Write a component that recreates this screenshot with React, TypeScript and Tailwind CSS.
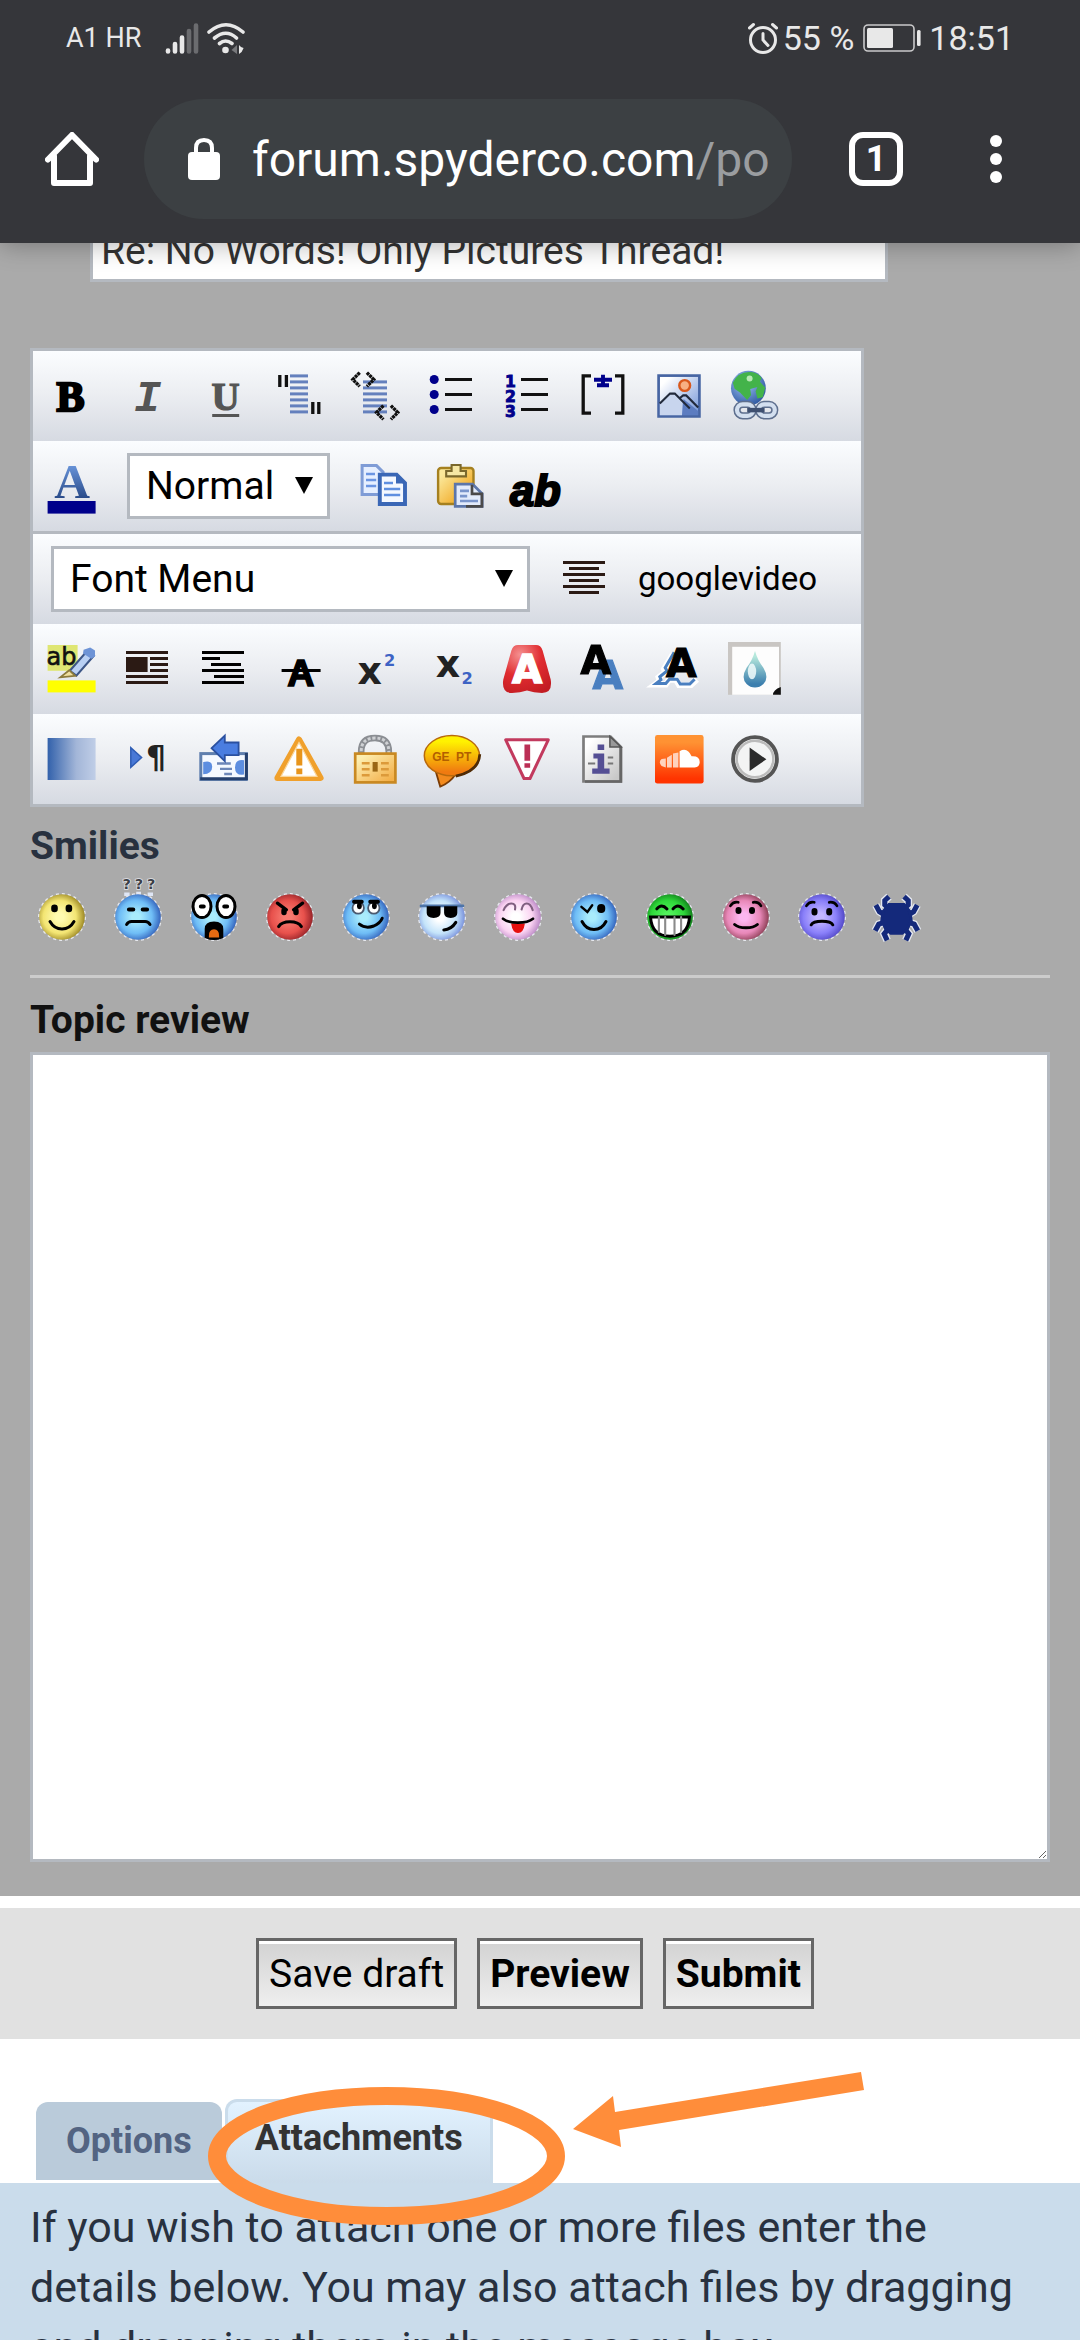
import type { ReactNode } from "react";

type Item = { name: string; art: ReactNode };

const SANS = "DejaVu Sans, sans-serif";
const ARIAL = "Liberation Sans, sans-serif";
const SERIF = "Liberation Serif, serif";
const MONO = "Liberation Mono, monospace";

function Art({ children }: { children: ReactNode }) {
  return (
    <svg viewBox="0 0 16 16" className="w-12 h-12 overflow-visible" aria-hidden="true">
      {children}
    </svg>
  );
}

function ToolButton({ item }: { item: Item }) {
  return (
    <button type="button" title={item.name} aria-label={item.name} className="w-[76px] h-full shrink-0 flex items-center justify-center">
      <Art>{item.art}</Art>
    </button>
  );
}

// Text-line icons: each entry is [x1, x2, y]
function Lines({ rows, color }: { rows: number[][]; color: string }) {
  return (
    <g stroke={color} strokeWidth="1">
      {rows.map(([x1, x2, y]) => (
        <line key={`${x1}-${y}`} x1={x1} x2={x2} y1={y} y2={y} />
      ))}
    </g>
  );
}

const formatTools: Item[] = [
  {
    name: "Bold",
    art: <text x="7.8" y="13" fontSize="14" fontWeight="700" fontFamily={SERIF} textAnchor="middle" stroke="#000" strokeWidth="0.8">B</text>,
  },
  {
    name: "Italic",
    art: <text x="8.2" y="13" fontSize="15" fontWeight="700" fontStyle="italic" fontFamily={MONO} textAnchor="middle" fill="#555">I</text>,
  },
  {
    name: "Underline",
    art: (
      <>
        <text x="8.9" y="12.8" fontSize="13" fontWeight="700" fontFamily={SERIF} textAnchor="middle" fill="#555" stroke="#555" strokeWidth="0.4">U</text>
        <rect x="4.4" y="14" width="9" height="1" fill="#555" />
      </>
    ),
  },
  {
    name: "Quote",
    art: (
      <>
        <Lines color="#6480bd" rows={[[5, 11, 1.3], [5, 11, 3.3], [5, 11, 5.3], [5, 11, 7.3], [5, 11, 9.3], [5, 11, 11.3], [5, 11, 13.3]]} />
        <path d="M1.6 1v4M3.8 1v4M12.6 10v4M14.6 10v4" stroke="#111" strokeWidth="1.1" />
      </>
    ),
  },
  {
    name: "Code",
    art: (
      <>
        <Lines color="#6480bd" rows={[[4, 12, 3.3], [4, 12, 5.3], [4, 12, 7.3], [4, 12, 9.3], [4, 12, 11.3], [4, 12, 13.3]]} />
        <path d="M2.9.2.6 2.5l2.3 2.3M5.3.2l2.3 2.3-2.3 2.3M10.8 11.2l-2.3 2.3 2.3 2.3M13.3 11.2l2.3 2.3-2.3 2.3" fill="none" stroke="#111" strokeWidth="1.1" strokeDasharray="1 .2" />
      </>
    ),
  },
  {
    name: "List",
    art: (
      <>
        <Lines color="#111" rows={[[6, 15, 2.5], [6, 15, 7.5], [6, 15, 12.5]]} />
        <g fill="#00008b">
          <circle cx="2.4" cy="2.5" r="1.5" />
          <circle cx="2.4" cy="7.5" r="1.5" />
          <circle cx="2.4" cy="12.5" r="1.5" />
        </g>
      </>
    ),
  },
  {
    name: "Ordered list",
    art: (
      <>
        <Lines color="#111" rows={[[6, 15, 2.5], [6, 15, 7.5], [6, 15, 12.5]]} />
        <g fill="#00008b" stroke="#00008b" strokeWidth="0.3" fontFamily={SANS} fontSize="5.2" fontWeight="700" textAnchor="middle">
          <text x="2.5" y="4.9">1</text>
          <text x="2.5" y="10">2</text>
          <text x="2.5" y="15.1">3</text>
        </g>
      </>
    ),
  },
  {
    name: "List item",
    art: (
      <>
        <path d="M4 1.3H1.4v12.4H4M12 1.3h2.6v12.4H12" fill="none" stroke="#111" strokeWidth="1.1" />
        <path d="M5 2.6h6M8 .9v3.6M6 4.4h4" stroke="#00008b" strokeWidth="1.3" />
      </>
    ),
  },
  {
    name: "Image",
    art: (
      <>
        <rect x="1.2" y="1.2" width="13.6" height="13.6" fill="url(#sky)" stroke="#4765a3" strokeWidth="0.9" />
        <path d="M1.6 10.5 6 6.7l3 2.8v4.9H1.6z" fill="#c8d5ee" />
        <path d="M9.5 9 14.4 13v1.4H9z" fill="#5c7cc0" />
        <path d="M1.6 10.5 5 7.2h1.6l5 5M8.4 8.6l1-.8h1l4 4" fill="none" stroke="#222a3c" strokeWidth="0.7" />
        <circle cx="9.9" cy="4.5" r="1.8" fill="#f7b083" stroke="#d9581c" strokeWidth="0.8" />
      </>
    ),
  },
  {
    name: "Link",
    art: (
      <>
        <circle cx="5.8" cy="5.4" r="5.8" fill="url(#globe)" />
        <path d="M.6 3.6Q2.4-.2 6.4 0q2.600.2 3.800 2l-1.400 3-2.400.7.3 2-1.300 1.600L3 6.800 1.200 5.600zM9.600 3.200l1.800 2-.8 3.200-1.800.4-.6-2.400z" fill="#43b34a" />
        <circle cx="6.2" cy="2.2" r="1" fill="#b7eab4" />
        <g fill="none" stroke="#5e6f8e" strokeWidth="2.4">
          <rect x="2" y="10.8" width="5.4" height="3.8" rx="1.9" />
          <rect x="9.2" y="10.8" width="5.4" height="3.8" rx="1.9" />
        </g>
        <g fill="none" stroke="#d3dfef" strokeWidth="1.4">
          <rect x="2" y="10.8" width="5.4" height="3.8" rx="1.9" />
          <rect x="9.2" y="10.8" width="5.4" height="3.8" rx="1.9" />
        </g>
        <path d="M5.4 12.7h5.8" stroke="#3e4f70" strokeWidth="1.5" />
      </>
    ),
  },
];

const fontColor: Item = {
  name: "Font colour",
  art: (
    <>
      <text x="8.4" y="12" fontSize="16.5" fontWeight="700" fontFamily={SERIF} textAnchor="middle" fill="url(#blueLetter)">A</text>
      <rect x="0.2" y="13" width="16" height="4.2" fill="#00008b" />
    </>
  ),
};

const clipboardTools: Item[] = [
  {
    name: "Copy",
    art: (
      <>
        <path d="M.7 1.200h4.800l2.200 2.200v7.400h-7z" fill="#e6efff" stroke="#7f9cd6" strokeWidth="1" />
        <path d="M2 4h3M2 6h3.400M2 8h3.400" stroke="#6b95e2" strokeWidth="0.9" />
        <path d="M6.600 4.200h5.600l2.800 2.800v7H6.600z" fill="#f4f8ff" stroke="#3a67b6" strokeWidth="1.3" />
        <path d="M8 7h3M8 9h5.400M8 11h5.400" stroke="#5f8fe0" strokeWidth="0.9" />
        <path d="M12 4.200V7.200h3z" fill="#3a67b6" />
      </>
    ),
  },
  {
    name: "Paste",
    art: (
      <>
        <rect x="0.7" y="2" width="11.800" height="12" rx="1" fill="url(#board)" stroke="#a5801f" strokeWidth="0.8" />
        <path d="M3.400 4.800V3h1.800V1h3v2H10v1.800z" fill="#f6e7a4" stroke="#7a682c" strokeWidth="0.7" />
        <path d="M6.400 7.400h5.800l3.200 3.200v4.200h-9z" fill="#e3ebfb" stroke="#5c76aa" strokeWidth="0.9" />
        <path d="M8 9.600h3M8 11.400h2.400M8 13h6" stroke="#7a95cb" strokeWidth="0.9" />
        <path d="M12 7.600v3h3.300v4.200H10" fill="none" stroke="#4b4a4a" strokeWidth="0.9" />
      </>
    ),
  },
  {
    name: "Plain text",
    art: <text x="7.8" y="14.6" fontSize="14.5" fontWeight="700" fontStyle="italic" fontFamily={ARIAL} textAnchor="middle" stroke="#000" strokeWidth="0.7">ab</text>,
  },
];

const centerTool: Item = {
  name: "Centre",
  art: <Lines color="#2b1a14" rows={[[1, 15, 2.5], [3, 13, 4.5], [1, 15, 6.5], [3, 13, 8.5], [1, 15, 10.5], [3, 13, 12.5]]} />,
};

const styleTools: Item[] = [
  {
    name: "Highlight",
    art: (
      <>
        <rect x="0.2" y="0" width="10" height="8.6" fill="#dfe673" />
        <text x="4.8" y="6.8" fontSize="8" fontFamily={SANS} textAnchor="middle" fill="#111" stroke="#111" strokeWidth="0.2">ab</text>
        <path d="m7.600 8.600 5.600-6.400 2.400 1.400-5.800 6.600z" fill="#b9d0f4" stroke="#3d5687" strokeWidth="0.7" />
        <path d="m12.200 1.600 2.200-.8 1.600 1v2l-1.200.8-2.800-1.800z" fill="#6d93d6" />
        <path d="M4.400 10.800 7.400 8.400l2 1.900z" fill="#f0dfa0" stroke="#8b7a3c" strokeWidth="0.6" />
        <rect x="0.2" y="11.8" width="16" height="4" fill="#ff0" />
      </>
    ),
  },
  {
    name: "Float left",
    art: (
      <>
        <Lines color="#2b1a14" rows={[[1, 15, 2.5], [9, 15, 4.5], [9, 15, 6.5], [9, 15, 8.5], [1, 15, 10.5], [1, 15, 12.5]]} />
        <rect x="1" y="4" width="7.2" height="5" fill="#2b1a14" />
      </>
    ),
  },
  {
    name: "Indent",
    art: <Lines color="#000" rows={[[1, 15, 2.5], [1, 7, 4.5], [4, 14, 6.5], [1, 15, 8.5], [5, 15, 10.5], [1, 15, 12.5]]} />,
  },
  {
    name: "Strikethrough",
    art: (
      <>
        <text x="8.6" y="13.8" fontSize="12.5" fontWeight="700" fontFamily={ARIAL} textAnchor="middle" stroke="#000" strokeWidth="0.5">A</text>
        <rect x="2.2" y="8" width="13" height="1" />
      </>
    ),
  },
  {
    name: "Superscript",
    art: (
      <>
        <text x="6.2" y="13" fontSize="12.6" fontWeight="700" fontFamily={SANS} textAnchor="middle" fill="#222">x</text>
        <text x="12.9" y="7" fontSize="5.4" fontWeight="700" fontFamily={SANS} textAnchor="middle" fill="#3d63c4">2</text>
      </>
    ),
  },
  {
    name: "Subscript",
    art: (
      <>
        <text x="7" y="10.8" fontSize="12.6" fontWeight="700" fontFamily={SANS} textAnchor="middle" fill="#222">x</text>
        <text x="13.4" y="13" fontSize="5.4" fontWeight="700" fontFamily={SANS} textAnchor="middle" fill="#3d63c4">2</text>
      </>
    ),
  },
  {
    name: "Glow",
    art: (
      <>
        <path d="M5 0h6q1.600 0 2.200 1.800l2.700 9.700Q16.600 16 13 16q-2.800 0-5-.8-2.200.8-5 .8-3.600 0-2.900-4.500L2.800 1.800Q3.400 0 5 0z" fill="url(#redGlow)" />
        <text x="8" y="12.8" fontSize="13" fontWeight="700" fontFamily={SANS} textAnchor="middle" fill="#fff" stroke="#fff" strokeWidth="0.5">A</text>
      </>
    ),
  },
  {
    name: "Drop shadow",
    art: (
      <text x="5.6" y="9.8" fontSize="13.2" fontWeight="700" fontFamily={SANS} textAnchor="middle" stroke="#000" strokeWidth="0.4" className="[filter:drop-shadow(4px_5px_0_#4a7fc0)]">A</text>
    ),
  },
  {
    name: "Wave",
    art: (
      <>
        <path d="M6 3 3 8l.6 1-2.400 1.800.4 1.200L0 13.200h3.600l1-1.600H7l1 1.700h4l2-1.800" fill="none" stroke="#fff" strokeWidth="2" />
        <path d="M6.400 2.400 3.400 7.600l.6 1-2.400 2 .4 1L.4 12.800h3.200l1.200-1.400h2.600l1 1.600h3.200l1.600-1.600" fill="none" stroke="#4a7fc0" strokeWidth="1" />
        <text x="8.8" y="10.7" fontSize="13.2" fontWeight="700" fontFamily={SANS} textAnchor="middle" stroke="#000" strokeWidth="0.4">A</text>
      </>
    ),
  },
  {
    name: "Blur",
    art: (
      <>
        <rect x="-1" y="-1" width="17.6" height="17.6" fill="#c9c6c3" />
        <rect x="0.4" y="0.6" width="15.6" height="16" fill="#fdfdfd" />
        <path d="M8 2q.8 3 2.800 5.600 2 3.400 0 5.400-1.200 1.200-2.800 1.200T5.200 13q-2-2 0-5.400Q7.200 5 8 2z" fill="url(#drop)" />
        <ellipse cx="7" cy="8.8" rx="1.4" ry="2.6" fill="#f2fcfc" opacity="0.85" />
        <path d="M14 16.600q0-1.600 2.600-2.600v2.600z" fill="#111" />
      </>
    ),
  },
];

const extraTools: Item[] = [
  { name: "Gradient", art: <rect x="0.2" y="1" width="16" height="14" fill="url(#blueFade)" /> },
  {
    name: "Left to right",
    art: (
      <>
        <path d="M2.600 4.200v6.600l3.600-3.300z" fill="#4878d6" stroke="#2e5cb4" strokeWidth="0.5" />
        <text x="11" y="11" fontSize="10.5" fontWeight="700" fontFamily={SANS} textAnchor="middle" fill="#222">¶</text>
      </>
    ),
  },
  {
    name: "Marquee",
    art: (
      <>
        <rect x="0.6" y="6.2" width="15.2" height="8.6" fill="#f5f9ff" stroke="#5f7fae" strokeWidth="1" />
        <path d="M.4 14.600h15.600M15.800 6v9" stroke="#26406d" strokeWidth="1" />
        <path d="M1.400 9q3-.8 3 1.600t-3 2.500zM15 8.400q-3-.4-3 2.400t3 2.400z" fill="#5d8ee0" />
        <path d="M6 9.500h4.600M7 11.300h4M8.400 13H11" stroke="#6d87b8" strokeWidth="0.8" />
        <path d="M4.200 4.400 8.600.2v2.300h4.600v4.200H8.600v2z" fill="#4a7de0" stroke="#2a50a0" strokeWidth="0.6" />
      </>
    ),
  },
  {
    name: "Moderator warning",
    art: (
      <>
        <path d="M8 1.500 15.200 14.300H.8z" fill="#fff" stroke="#f0a02c" strokeWidth="2" strokeLinejoin="round" />
        <path d="M8 2.500 14 13.800H2z" fill="#fff" stroke="#fbd79c" strokeWidth="0.4" />
        <path d="M8.100 4.600v5.600M8.100 11.200v1.900" stroke="#e8951c" strokeWidth="2" />
      </>
    ),
  },
  {
    name: "Hidden",
    art: (
      <>
        <path d="M3.400 7V5.500Q3.400 1 8 1t4.600 4.500V7" fill="none" stroke="#8b8e93" strokeWidth="2.200" />
        <path d="M3.400 7V5.500Q3.400 1 8 1t4.600 4.500V7" fill="none" stroke="#cfd1d4" strokeWidth="1" strokeDasharray="1 .6" />
        <rect x="1.4" y="6.2" width="13.4" height="9.6" fill="url(#brass)" stroke="#c98922" strokeWidth="0.9" />
        <path d="M3.600 9.400h2.600M3.600 11.400h2.600M3.600 13.400h2.600M10 9.400h2.600M10 11.400h2.600M10 13.400h2.600" stroke="#dc9a3a" strokeWidth="0.8" />
        <rect x="7.2" y="9" width="1.7" height="3.2" fill="#9a6614" />
      </>
    ),
  },
  {
    name: "Spoiler",
    art: (
      <>
        <path d="M3 12.400 4.400 17.200Q7.600 16 9.600 13z" fill="#f38a1c" stroke="#7a3c06" strokeWidth="0.6" />
        <ellipse cx="8.3" cy="6.9" rx="9.2" ry="6.7" fill="url(#bubble)" stroke="#b8690c" strokeWidth="0.5" />
        <path d="M9.600 13.700Q17.400 12 17.600 6.400" fill="none" stroke="#4f2b06" strokeWidth="0.9" />
        <g fill="#b25f00" fontFamily={ARIAL} fontSize="4" fontWeight="700" textAnchor="middle">
          <text x="4.6" y="8.6">GE</text>
          <text x="12.2" y="8.6">PT</text>
        </g>
      </>
    ),
  },
  {
    name: "Off topic",
    art: (
      <>
        <path d="M.9 1.600h14.200L9 14.500H7z" fill="#fff" stroke="#c23a5e" strokeWidth="1" strokeLinejoin="round" />
        <path d="M8.100 3.200v5.400M8.100 9.400v1.500" stroke="#bb2f55" strokeWidth="1.9" />
      </>
    ),
  },
  {
    name: "Info",
    art: (
      <>
        <path d="M1.500.5h9L14 4v11.500H1.500z" fill="url(#page)" stroke="#7d7d7d" strokeWidth="0.9" />
        <path d="M13.900 4v11.500H2" fill="none" stroke="#666" strokeWidth="0.9" />
        <path d="M10.300.5V4H14z" fill="#999" stroke="#555" strokeWidth="0.5" />
        <path d="M3 9.500h2.400M9.600 7.500h1.800M9.600 9.500h1.800" stroke="#777" strokeWidth="0.7" />
        <path d="M6.200 3.200h2.200v1.800H6.200zM4.800 6.200h3.600v5h1.800v1.700H4.400v-1.700h1.800V7.800H4.800z" fill="#554f94" />
      </>
    ),
  },
  {
    name: "SoundCloud",
    art: (
      <>
        <rect x="0" y="0" width="16.2" height="16.2" rx="0.8" fill="url(#orange)" />
        <path d="M8.200 10.800V5.400q2.600-1.500 4 1.700 2.700-.2 2.700 1.900 0 1.800-1.700 1.800z" fill="#fff" />
        <path d="M7.800 5.800v5H6V6.200zM5.600 6.600v4.200H4V7.600zM3.600 7.800v3l-1.400-.5Q1 9 2.200 8z" fill="#ffd2bd" />
      </>
    ),
  },
  {
    name: "Video",
    art: (
      <>
        <circle cx="8" cy="8" r="7.3" fill="#f3f4f4" stroke="#555" strokeWidth="1.3" />
        <circle cx="8" cy="8" r="6.1" fill="none" stroke="#bbb" strokeWidth="0.8" />
        <path d="M6.200 4.200V12l5.600-3.900z" fill="#2b2b2b" />
      </>
    ),
  },
];

function Face({ fill, children }: { fill: string; children: ReactNode }) {
  return (
    <>
      <circle cx="8" cy="8" r="7.7" fill="none" stroke="#e6e8ee" strokeWidth="0.6" strokeDasharray="1 1" />
      <circle cx="8" cy="8" r="7.6" fill={fill} />
      <g fill="none" stroke="#000" strokeWidth="1" strokeLinecap="round">{children}</g>
    </>
  );
}

const smilies: Item[] = [
  {
    name: "smile",
    art: (
      <Face fill="url(#fYellow)">
        <path d="M4 9.500q1.400 2.500 4 2.500t4-2.500" />
        <path d="M5.500 4.900v.4M10.300 4.900v.4" strokeWidth="2.2" />
      </Face>
    ),
  },
  {
    name: "confused",
    art: (
      <>
        <g fill="#3c3f46" fontFamily={SANS} fontSize="4.800" fontWeight="700" textAnchor="middle" stroke="#e4e6ea" strokeWidth="0.5" paintOrder="stroke">
          <text x="4.2" y="-1.200">?</text>
          <text x="8.3" y="-1.200">?</text>
          <text x="12.4" y="-1.200">?</text>
        </g>
        <path d="M3.400.4h1.800M7.400.2H9M11.200.4H13" stroke="#dfe6f5" strokeWidth="1.2" />
        <Face fill="url(#fBlue)">
          <path d="M4.200 10.500q.6-1 1.600-1h4.600q1 0 1.600 1" />
          <path d="M5 5.500h1.400M9.600 5.500H11" strokeWidth="1.4" />
        </Face>
      </>
    ),
  },
  {
    name: "eek",
    art: (
      <Face fill="url(#fBlue)">
        <ellipse cx="4" cy="4.500" rx="3" ry="3.700" fill="#fff" />
        <ellipse cx="12" cy="4.500" rx="3" ry="3.700" fill="#fff" />
        <path d="M3.600 4.500h1M11.400 4.500h1" strokeWidth="1.3" />
        <path d="M5.400 14.600V12q0-2 2.600-2t2.600 2v2.600q-2.600 1.200-5.200 0z" fill="#000" />
        <path d="M6.800 14.300q0-1.700 1.200-1.700t1.200 1.700z" fill="#e66a12" stroke="#e66a12" />
      </Face>
    ),
  },
  {
    name: "mad",
    art: (
      <Face fill="url(#fRed)">
        <path d="m3.800 3.400 3 2.200M12.200 3.400l-3 2.200" strokeWidth="1.100" />
        <path d="M6 5.900v.6M10 5.900v.6" strokeWidth="1.8" />
        <path d="M4.200 11.200q1-1.600 3.800-1.600t3.800 1.600" />
      </Face>
    ),
  },
  {
    name: "rolleyes",
    art: (
      <Face fill="url(#fBlue)">
        <circle cx="5.4" cy="5" r="1.9" fill="#fff" stroke="#4b5a70" strokeWidth="0.6" />
        <circle cx="10.6" cy="5" r="1.9" fill="#fff" stroke="#4b5a70" strokeWidth="0.6" />
        <path d="M4 2.900h2.600M9.400 2.900H12" strokeWidth="1.3" />
        <path d="M5.800 4v.6M10.800 4v.6" strokeWidth="1.6" />
        <path d="M5.800 10.400q2 1.600 4.800.6 2.200-1 2.800-2.600" />
      </Face>
    ),
  },
  {
    name: "cool",
    art: (
      <Face fill="url(#fPale)">
        <path d="M1 4.300h14" stroke="#4d74a8" strokeWidth="0.9" />
        <path d="M3.200 4.700h4v2Q7.200 8 5.200 8t-2-1.300zM9 4.700h3.800v2q0 1.300-1.900 1.300T9 6.700z" fill="#000" strokeWidth="0.6" />
        <path d="M8.600 12.300q2.600-.2 4-2.500" />
      </Face>
    ),
  },
  {
    name: "tongue",
    art: (
      <Face fill="url(#fPink)">
        <path d="M3.200 5.700q1-2.200 2.600-2.200T7 5.500M9.200 5.500q.4-2 1.700-2t2 2.200" stroke="#806080" strokeWidth="0.7" />
        <path d="M6 10.400h4q-.4 2.700-2 2.700t-2-2.700z" fill="#e60f0f" stroke="#e60f0f" strokeWidth="0.5" />
        <path d="M3 8.600q1.600 1.300 5 1.300t5-1.300" strokeWidth="0.9" />
      </Face>
    ),
  },
  {
    name: "wink",
    art: (
      <Face fill="url(#fBlue)">
        <path d="m3.800 4.600 2 1.700 1.600-2.200" strokeWidth="0.8" />
        <path d="M10.400 5v.3" strokeWidth="2.7" />
        <path d="M4 9.500q1.400 2.700 4 2.700t4-2.700" />
      </Face>
    ),
  },
  {
    name: "biggrin",
    art: (
      <Face fill="url(#fGreen)">
        <path d="M3.600 5.300q1.600-2 3.400 0M9 5.300q1.600-2 3.400 0" />
        <path d="M1.500 8h13q-.4 6.400-6.500 6.400T1.500 8z" fill="#fff" />
        <path d="M4.300 8v5M6.400 8v6M9.500 8v6M11.700 8v5" stroke="#8b8b8b" strokeWidth="0.7" />
      </Face>
    ),
  },
  {
    name: "redface",
    art: (
      <Face fill="url(#fRose)">
        <path d="M2.800 4.300q1-1.600 2.600-1.200M10.400 3.100q1.800-.2 2.600 1.200" strokeWidth="0.9" />
        <path d="M5.500 5.700v.3M10 5.700v.3" strokeWidth="2" />
        <path d="M4.200 10.500q1.200 1.100 3.800 1.100t3.800-1.100" />
      </Face>
    ),
  },
  {
    name: "frown",
    art: (
      <Face fill="url(#fViolet)">
        <path d="M2.800 4.300q1-1.600 2.600-1.200M10.400 3.100q1.800-.2 2.600 1.200" strokeWidth="0.9" />
        <path d="M5.500 6v.5M10.400 6v.5" strokeWidth="2" />
        <path d="M4.400 10.600q.6-1.200 3.600-1.200t3.600 1.200" />
      </Face>
    ),
  },
  {
    name: "spyder",
    art: (
      <g fill="none" stroke="#14297b">
        <path d="M5.200 5.500 3.600 4V2.500L5 1.200M9.800 5.500 11.400 4V2.500L10 1.200M4 7.600 1.800 6.200.6 4M11 7.600l2.200-1.400L14.400 4M4 9.600 1.600 10.400.4 12.600M11 9.600l2.400.8 1.200 2.200M5 11.600l-1.600 2 1 2.200M10 11.600l1.600 2-1 2.200" stroke="#e4e7ef" strokeWidth="2.6" />
        <path d="M5.200 5.500 3.600 4V2.500L5 1.200M9.800 5.500 11.400 4V2.500L10 1.200M4 7.600 1.800 6.200.6 4M11 7.600l2.200-1.400L14.400 4M4 9.600 1.600 10.400.4 12.600M11 9.600l2.400.8 1.200 2.200M5 11.600l-1.600 2 1 2.200M10 11.600l1.600 2-1 2.200" strokeWidth="1.7" />
        <path d="M5 3.800h5l2 2.400.4 3-1.400 3-1.600 1.200H5.600L4 12.200l-1.400-3 .4-3z" fill="#14297b" />
      </g>
    ),
  },
];

const faceGradients = [
  ["fYellow", "#fffbb0", "#f3e573", "#8f7a18"],
  ["fBlue", "#a9ecfc", "#6fbdf6", "#2b56b4"],
  ["fRed", "#f77a70", "#e8514c", "#8b1d24"],
  ["fPale", "#ffffff", "#c4e4fa", "#6f86d8"],
  ["fPink", "#ffffff", "#fbd3f2", "#b27fc0"],
  ["fGreen", "#53f25c", "#2fd83a", "#0c7216"],
  ["fRose", "#fcb6f0", "#e888b8", "#813448"],
  ["fViolet", "#c3b6ff", "#8a80fa", "#4a40c0"],
];

const linearGradients = [
  ["sky", "#ffffff", "#7f9edb", "1"],
  ["blueLetter", "#6e9ae0", "#1f3f7c", "0"],
  ["board", "#fbe89a", "#ef9f12", "1"],
  ["page", "#ffffff", "#c8c8c8", "1"],
  ["brass", "#fdeeb0", "#f3b04a", "1"],
  ["orange", "#ff9233", "#ff3400", "0"],
  ["bubble", "#fff200", "#f07a10", "0"],
  ["drop", "#b5e8dc", "#3c7fae", "0"],
];

function Gradients() {
  return (
    <svg className="absolute w-0 h-0" aria-hidden="true">
      <defs>
        {faceGradients.map(([id, inner, mid, outer]) => (
          <radialGradient key={id} id={id} cx="0.45" cy="0.5" r="0.58">
            <stop offset="0.15" stopColor={inner} />
            <stop offset="0.62" stopColor={mid} />
            <stop offset="1" stopColor={outer} />
          </radialGradient>
        ))}
        {linearGradients.map(([id, from, to, x2]) => (
          <linearGradient key={id} id={id} x1="0" y1="0" x2={x2} y2="1">
            <stop offset="0.15" stopColor={from} />
            <stop offset="0.9" stopColor={to} />
          </linearGradient>
        ))}
        <linearGradient id="blueFade">
          <stop offset="0" stopColor="#3261ab" />
          <stop offset="0.6" stopColor="#a3b6d8" />
          <stop offset="1" stopColor="#c0cee7" />
        </linearGradient>
        <radialGradient id="globe" cx="0.4" cy="0.35" r="0.7">
          <stop offset="0" stopColor="#a4c8fa" />
          <stop offset="1" stopColor="#2c569f" />
        </radialGradient>
        <radialGradient id="redGlow" cx="0.35" cy="0.2" r="0.9">
          <stop offset="0" stopColor="#f59090" />
          <stop offset="0.5" stopColor="#e02c30" />
          <stop offset="1" stopColor="#c21c22" />
        </radialGradient>
      </defs>
    </svg>
  );
}

function StatusBar() {
  return (
    <div className="flex items-center h-[76px] px-[66px] text-[#e8e8e8]">
      <span className="text-[27px] leading-8">A1 HR</span>
      <svg viewBox="0 0 34 32" className="w-[34px] h-8 ml-6" aria-label="Signal">
        <g strokeWidth="4.6" strokeLinecap="round" stroke="#e8e8e8">
          <path d="M3 28.500v1M10 22v7.500M17 15.500v14" />
          <path d="M24 9v20.500M31 3.500v26" stroke="#6b6c6f" />
        </g>
      </svg>
      <svg viewBox="0 0 38 32" className="w-[38px] h-8 ml-2" aria-label="Wi-Fi">
        <g fill="none" stroke="#e8e8e8" strokeWidth="3.6" strokeLinecap="round">
          <path d="M2 10q17-14.500 34 0M7.500 16q11.500-9.500 22 0M12.500 21.500q6-5 12.500 0" />
        </g>
        <circle cx="18.5" cy="28" r="3.3" fill="#e8e8e8" />
        <path d="M30 23v9l-5.500-4z" fill="#77787b" />
        <path d="M32 23v9l2.600-2 2-4-2.600-1z" fill="#e8e8e8" />
      </svg>
      <span className="grow" />
      <svg viewBox="0 0 30 32" className="w-[30px] h-8" aria-label="Alarm">
        <g fill="none" stroke="#e8e8e8" strokeWidth="3" strokeLinecap="round">
          <circle cx="15" cy="18" r="12.5" />
          <path d="M1.500 6 5.500 2.500M28.500 6l-4-3.500M15 11.500V18l5 5.500" />
        </g>
      </svg>
      <span className="text-[34px] leading-10 ml-[5px]">55 %</span>
      <svg viewBox="0 0 58 28" className="w-[58px] h-7 ml-[9px]" aria-label="Battery">
        <rect x="1" y="1" width="50" height="26" rx="4" fill="none" stroke="#c9c9ca" strokeWidth="1.6" />
        <rect x="4" y="4" width="26" height="20" rx="1.5" fill="#e8e8e8" />
        <rect x="54" y="6" width="3.6" height="16" rx="1.5" fill="#e8e8e8" />
      </svg>
      <span className="text-[34px] leading-10 ml-2">18:51</span>
    </div>
  );
}

function BrowserBar() {
  return (
    <div className="flex items-center h-[167px] pb-[2px] pl-[45px] pr-[66px] text-white">
      <button type="button" aria-label="Home">
        <svg viewBox="0 0 54 54" className="w-[54px] h-[54px]">
          <path d="M3 27.500 27 3l24 24.500M9 24v27h36V24" fill="none" stroke="#fff" strokeWidth="6" strokeLinecap="round" strokeLinejoin="round" />
        </svg>
      </button>
      <div className="flex items-center grow h-[120px] ml-[45px] pl-11 rounded-full bg-[#3c4043] min-w-0">
        <svg viewBox="0 0 32 42" className="w-8 h-[42px] shrink-0" aria-label="Secure">
          <path d="M8 16v-6q0-8 8-8t8 8v6" fill="none" stroke="#fff" strokeWidth="4" />
          <rect x="0" y="14" width="32" height="28" rx="4" fill="#fff" />
        </svg>
        <a href="#" className="ml-8 pt-[3px] text-[48px] leading-[56px] whitespace-nowrap">
          forum.spyderco.com<span className="text-[#9a9da0]">/po</span>
        </a>
      </div>
      <button type="button" aria-label="Tabs" className="flex items-center justify-center w-[54px] h-[54px] ml-[57px] border-[6px] border-white rounded-[14px] text-[36px] leading-[42px] font-bold">
        1
      </button>
      <button type="button" aria-label="More" className="flex flex-col items-center gap-[6px] ml-[75px] px-3">
        <span className="w-3 h-3 rounded-full bg-white" />
        <span className="w-3 h-3 rounded-full bg-white" />
        <span className="w-3 h-3 rounded-full bg-white" />
      </button>
    </div>
  );
}

const rowClass = "flex items-center h-[90px] bg-linear-to-b from-[#fbfdff] via-[#ebedf1] to-[#d6dae2]";

function Dropdown({ label, option, className }: { label: string; option: string; className: string }) {
  return (
    <div className={`relative h-[66px] shrink-0 ${className}`}>
      <select aria-label={label} className="appearance-none w-full h-full pl-4 border-[3px] border-[#b4b9c0] bg-white text-black text-[39px] leading-[48px]">
        <option>{option}</option>
      </select>
      <svg viewBox="0 0 18 17" className="absolute right-[17px] top-6 w-[18px] h-[17px] pointer-events-none" aria-hidden="true">
        <path d="M0 0h18L9 17z" />
      </svg>
    </div>
  );
}

function Toolbar() {
  return (
    <div className="w-[834px] max-w-full border-[3px] border-[#b4b9c0]">
      <div className={rowClass}>
        {formatTools.map((item) => <ToolButton key={item.name} item={item} />)}
      </div>
      <div className={rowClass}>
        <ToolButton item={fontColor} />
        <Dropdown label="Font size" option="Normal" className="w-[203px] ml-[18px] mr-4" />
        {clipboardTools.map((item) => <ToolButton key={item.name} item={item} />)}
      </div>
      <div className="border-t-[3px] border-[#b4b9c0]">
        <div className={rowClass}>
          <Dropdown label="Font" option="Font Menu" className="w-[479px] ml-[18px] mr-4" />
          <ToolButton item={centerTool} />
          <button type="button" className="pl-4 text-[33px] leading-10 text-black">googlevideo</button>
        </div>
      </div>
      <div className={rowClass}>
        {styleTools.map((item) => <ToolButton key={item.name} item={item} />)}
      </div>
      <div className={rowClass}>
        {extraTools.map((item) => <ToolButton key={item.name} item={item} />)}
      </div>
    </div>
  );
}

const submitClass =
  "h-[71px] px-[10px] border-[3px] border-[#666] bg-linear-to-b from-[#d2d2d2] to-[#efefef] shadow-[inset_0_3px_0_#fff] text-black text-[39px] leading-[48px]";

export default function App() {
  return (
    <div className="flex flex-col h-screen overflow-hidden bg-white font-['Roboto',sans-serif]">
      <Gradients />
      <header className="relative z-10 shrink-0 bg-[#35363a] shadow-[0_2px_24px_rgba(0,0,0,0.3)]">
        <StatusBar />
        <BrowserBar />
      </header>

      <main className="grow min-h-0 overflow-hidden">
        <section className="px-[30px] pb-[34px] bg-[#aaa]">
          <div className="-mt-[27px] pl-[60px]">
            <input
              type="text"
              aria-label="Subject"
              defaultValue="Re: No Words! Only Pictures Thread!"
              className="block w-[798px] h-[66px] px-2 pt-[3px] border-[3px] border-[#b4b9c0] bg-white text-[#333] text-[39px] leading-[48px]"
            />
          </div>
          <div className="mt-[66px]">
            <Toolbar />
          </div>

          <h3 className="mt-[15px] text-[39px] leading-[48px] font-bold">
            <a href="#" className="text-[#28313f]">Smilies</a>
          </h3>
          <div className="flex gap-7 mt-[23px] pl-2">
            {smilies.map((item) => (
              <a key={item.name} href="#" aria-label={item.name}>
                <Art>{item.art}</Art>
              </a>
            ))}
          </div>

          <hr className="mt-[34px] border-0 h-[3px] bg-[#ccc]" />
          <label htmlFor="review" className="block mt-[18px] text-[39px] leading-[48px] font-bold text-[#111]">Topic review</label>
          <textarea id="review" className="block w-full h-[810px] mt-2 border-[3px] border-[#b4b9c0] bg-white" />
        </section>

        <div className="flex items-center justify-center gap-5 h-[131px] mt-3 pr-[10px] bg-[#e1e1e1]">
          <button type="button" className={submitClass}>Save draft</button>
          <button type="button" className={`${submitClass} font-bold`}>Preview</button>
          <button type="button" className={`${submitClass} font-bold`}>Submit</button>
        </div>

        <div className="relative mt-[60px]">
          <nav className="flex items-start gap-[3px] h-[84px] pl-9">
            <a href="#" className="h-[78px] mt-[3px] px-[30px] pt-[15px] rounded-t-[12px] bg-[#bacbda] text-[#536482] text-[36px] leading-[48px] font-bold">
              Options
            </a>
            <a href="#" className="h-[84px] px-[27px] pt-[12px] rounded-t-[12px] border-[3px] border-b-0 border-[#cadceb] bg-linear-to-b from-[#e2f2ff] to-[#cadbea] text-[#333] text-[36px] leading-[48px] font-bold">
              Attachments
            </a>
          </nav>
          <div className="px-[30px] pt-[14px] pb-9 bg-[#cadceb] text-[#28313f] text-[43px] leading-[60px]">
            <p>
              If you wish to attach one or more files enter the details below. You may also attach files by dragging and dropping them in the message box.
            </p>
          </div>
          {/* hand-drawn marker over the Attachments tab */}
          <svg viewBox="0 0 660 160" className="absolute left-[206px] -top-[29px] w-[660px] h-40 pointer-events-none" aria-hidden="true">
            <ellipse cx="180.5" cy="86" rx="169.500" ry="60" fill="none" stroke="#ff8d3a" strokeWidth="18" />
            <path d="M367 59 407 26l2 16L655 2l3 18L413 60l2 17z" fill="#ff8d3a" />
          </svg>
        </div>
      </main>
    </div>
  );
}
